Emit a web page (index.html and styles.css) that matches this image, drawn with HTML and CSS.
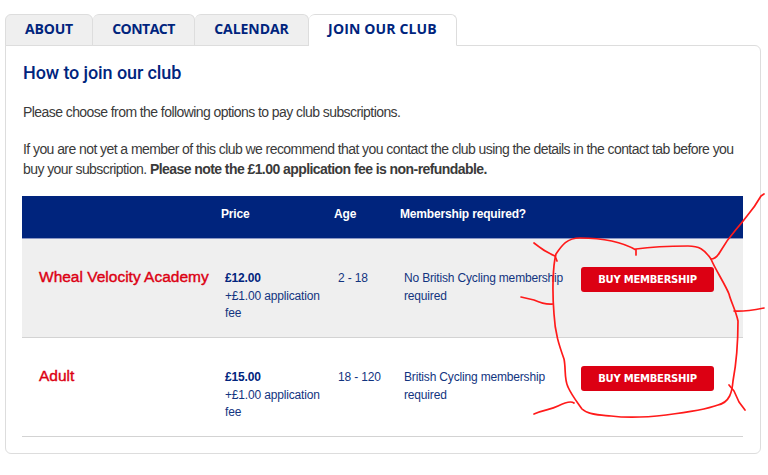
FILE: index.html
```html
<!DOCTYPE html>
<html lang="en">
<head>
    <meta charset="UTF-8">
    <meta name="viewport" content="width=device-width, initial-scale=1.0">
    <title>Join our club</title>
    <link rel="stylesheet" href="styles.css">
</head>
<body>
    <nav class="tabs">
        <a class="tab tab-about">About</a>
        <a class="tab tab-contact">Contact</a>
        <a class="tab tab-calendar">Calendar</a>
        <a class="tab tab-join active">Join our club</a>
    </nav>
    <main class="panel">
        <h1>How to join our club</h1>
        <p class="intro">Please choose from the following options to pay club subscriptions.</p>
        <p class="intro">If you are not yet a member of this club we recommend that you contact the club using the details in the contact tab before you<br>buy your subscription. <strong>Please note the £1.00 application fee is non-refundable.</strong></p>
        <table class="options">
            <colgroup>
                <col class="col-name">
                <col class="col-price">
                <col class="col-age">
                <col class="col-required">
                <col>
            </colgroup>
            <thead>
                <tr>
                    <th></th>
                    <th>Price</th>
                    <th>Age</th>
                    <th>Membership required?</th>
                    <th></th>
                </tr>
            </thead>
            <tbody>
                <tr class="shaded">
                    <td class="name">Wheal Velocity Academy</td>
                    <td><strong>£12.00</strong><br>+£1.00 application fee</td>
                    <td>2 - 18</td>
                    <td>No British Cycling membership required</td>
                    <td class="action"><button class="button">Buy membership</button></td>
                </tr>
                <tr>
                    <td class="name">Adult</td>
                    <td><strong>£15.00</strong><br>+£1.00 application fee</td>
                    <td>18 - 120</td>
                    <td>British Cycling membership required</td>
                    <td class="action"><button class="button">Buy membership</button></td>
                </tr>
            </tbody>
        </table>
    </main>

    <!-- hand drawn ring round the buy buttons -->
    <svg class="marker" width="768" height="475" viewBox="0 0 768 475">
        <path d="M636 250C624 243 605 238 580 238C567 238 562 245 556 254C553 265 552 290 554 314C555 333 559 345 564 359C566 368 564 379 568 387C572 396 578 403 582 409C588 415 602 415 611 416C627 418 649 417 666 415C690 412 707 409 718 405C730 402 732 392 733 381C736 365 738 340 738 321C736 311 731 302 729 294C725 284 715 269 711 259C704 249 699 246 688 246C672 246 650 247 636 249V255"/>
        <path d="M534 243C540 248 548 253 555 256L557 261"/>
        <path d="M521 297L534 300Q545 305 553 304"/>
        <path d="M711 259Q716 259 720 252C730 234 735 232 747 216C754 208 757 203 761 196L764 194"/>
        <path d="M734 311Q743 312 764 308"/>
        <path d="M729 385L734 391L739 402L745 410"/>
        <path d="M534 414C546 409 550 410 558 406Q570 400 574 403"/>
    </svg>
</body>
</html>
```
FILE: styles.css
```css
body {
    font-family: "Liberation Sans", Arial, sans-serif;
    background-color: #fff;
    color: #3a3a3a;
    margin: 0;
    padding: 14px 7px 0 5px;
    overflow: hidden;
}
.tabs {
    display: flex;
    position: relative;
    z-index: 1;
    height: 32px;
}
.tab {
    box-sizing: border-box;
    height: 32px;
    border: 1px solid #ddd;
    border-left-width: 0;
    border-radius: 6px 6px 0 0;
    background-color: #efefef;
    color: #00247d;
    font: 700 14px/28px "Open Sans", sans-serif;
    letter-spacing: -0.15px;
    text-align: center;
    text-transform: uppercase;
    white-space: nowrap;
}
.tab-about {
    width: 88px;
    border-left-width: 1px;
}
.tab-contact {
    width: 102px;
    letter-spacing: -0.5px;
}
.tab-calendar {
    width: 114px;
    letter-spacing: -0.05px;
}
.tab-join {
    width: 148px;
    letter-spacing: 0.15px;
}
.tab.active {
    background-color: #fff;
    border-bottom-color: #fff;
}
.panel {
    box-sizing: border-box;
    width: 756px;
    height: 409px;
    margin-top: -1px;
    padding: 0 17px;
    border: 1px solid #ddd;
    border-radius: 0 6px 6px 6px;
}
h1 {
    margin: 16px 0 18px;
    color: #00247d;
    font: 500 18px/22px Roboto, sans-serif;
    letter-spacing: -0.1px;
}
.intro {
    margin: 0 0 17px;
    font-size: 14px;
    line-height: 20px;
    letter-spacing: -0.57px;
    white-space: nowrap;
}
.options {
    width: 721px;
    table-layout: fixed;
    border-collapse: separate;
    border-spacing: 0;
    margin-left: -1px;
    color: #12347f;
    font-size: 12px;
    line-height: 17.5px;
    letter-spacing: -0.17px;
}
.col-name {
    width: 186px;
}
.col-price {
    width: 113px;
}
.col-age {
    width: 66px;
}
.col-required {
    width: 181px;
}
.options th {
    height: 43px;
    padding: 0 0 4px 13px;
    box-sizing: border-box;
    border-bottom: 1px solid #8b97c4;
    background-color: #00247d;
    color: #fff;
    text-align: left;
    white-space: nowrap;
}
.options td {
    height: 99px;
    box-sizing: border-box;
    padding: 31px 0 0 17px;
    border-bottom: 1px solid #d3d3d3;
    vertical-align: top;
}
.options strong {
    color: #00247d;
}
.shaded {
    background-color: #efefef;
}
.options .name {
    color: #dc0013;
    font-size: 15.5px;
    letter-spacing: 0;
    -webkit-text-stroke: 0.4px #dc0013;
    white-space: nowrap;
    padding-top: 29px;
}
.options .action {
    padding: 28px 0 0 13px;
}
.button {
    display: block;
    width: 133px;
    height: 25px;
    padding: 0;
    border: none;
    border-radius: 3px;
    background-color: #dc0013;
    color: #fff;
    font: 700 10px/25px "DejaVu Sans", sans-serif;
    letter-spacing: -0.25px;
    text-transform: uppercase;
    cursor: pointer;
}
.marker {
    position: absolute;
    top: 0;
    left: 0;
    z-index: 2;
    fill: none;
    stroke: #ff1a1a;
    stroke-width: 1.7;
    stroke-linecap: round;
    stroke-linejoin: round;
    pointer-events: none;
}
```
